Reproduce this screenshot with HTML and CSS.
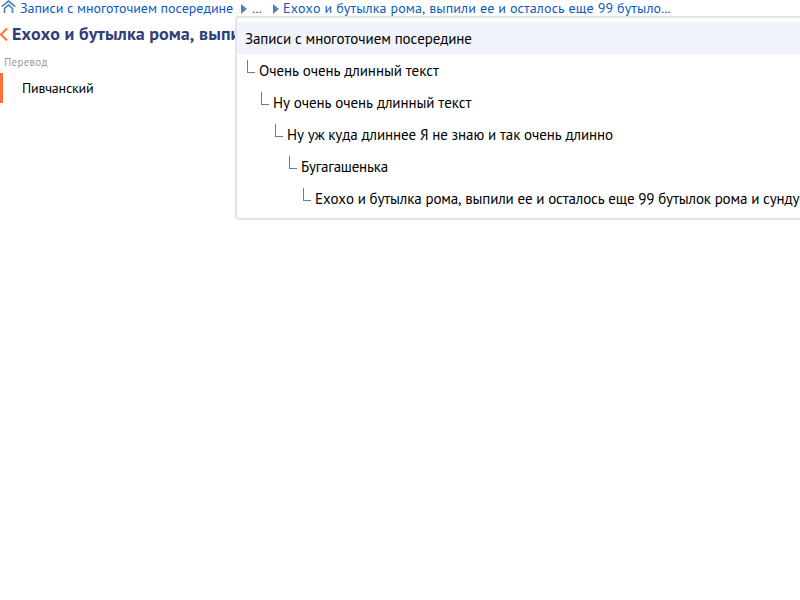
FILE: index.html
```
<!DOCTYPE html>
<html lang="ru">
<head>
<meta charset="utf-8">
<title>Перевод</title>
<link rel="stylesheet" href="styles.css">
</head>
<body>
<nav class="crumbs">
  <svg class="home" width="15" height="14" viewBox="0 0 15 14"><path d="M.700 6.700 7.500 1l6.800 5.700M3.500 13V8.500l4-3.700 4 3.700V13"/></svg>
  <a class="crumb first">Записи с многоточием посередине</a>
  <i class="arrow"></i>
  <a class="crumb dots">...</a>
  <i class="arrow"></i>
  <a class="crumb last">Ехохо и бутылка рома, выпили ее и осталось еще 99 бутыло...</a>
</nav>
<header class="heading">
  <svg class="back" width="8" height="14" viewBox="0 0 8 14"><path d="M7 1.500 1 7.500l6 6"/></svg>
  <h1 class="title">Ехохо и бутылка рома, выпи</h1>
</header>
<div class="label">Перевод</div>
<div class="value"><span>Пивчанский</span></div>
<ul class="menu">
  <li class="item active"><span>Записи с многоточием посередине</span></li>
  <li class="item l1"><i class="branch"></i><span>Очень очень длинный текст</span></li>
  <li class="item l2"><i class="branch"></i><span>Ну очень очень длинный текст</span></li>
  <li class="item l3"><i class="branch"></i><span>Ну уж куда длиннее Я не знаю и так очень длинно</span></li>
  <li class="item l4"><i class="branch"></i><span>Бугагашенька</span></li>
  <li class="item l5"><i class="branch"></i><span>Ехохо и бутылка рома, выпили ее и осталось еще 99 бутылок рома и сунду</span></li>
</ul>
</body>
</html>
```
FILE: styles.css
```
body {
  margin: 0;
  height: 600px;
  overflow: hidden;
  position: relative;
  background: #fff;
  color: #000;
  font: 15px/18px "PT Sans", "Noto Sans", sans-serif;
  font-kerning: none;
  white-space: nowrap;
}
.crumbs { display: flex; height: 18px; color: #0b5ac0; font-size: 14px; line-height: 17px; }
.home { flex: none; margin: 0 4px 0 1px; fill: none; stroke: #5580b8; stroke-width: 1.7; }
.crumb { flex: none; }
.first { width: 213px; letter-spacing: -0.05px; }
.dots { width: 13px; letter-spacing: 0.4px; }
.last { letter-spacing: 0.135px; }
.arrow { flex: none; margin: 4px 5px 0 8px; width: 0; height: 0; border: solid transparent; border-width: 5px 0 5px 6px; border-left-color: #5580b8; }
.arrow + .last { margin-left: -1px; }
.heading { display: flex; height: 34px; }
.back { flex: none; margin: 9px 4px 0 0; fill: none; stroke: #ff7033; stroke-width: 2; }
.title { margin: 0; width: 224px; font-size: 18px; line-height: 32px; letter-spacing: 0.05px; color: #313e78; }
.label { height: 21px; padding-left: 4px; font-size: 11px; line-height: 20px; letter-spacing: 0.3px; color: #999; }
.value { height: 30px; padding-left: 19px; border-left: 3px solid #ff7033; font-size: 14px; line-height: 31px; letter-spacing: -0.22px; }
.menu { position: absolute; left: 235px; right: 0; top: 16px; height: 192px; margin: 0; padding: 4px 0; border: 2px solid #e3e3e3; border-right: 0; border-radius: 4px 0 0 4px; background: #fff; list-style: none; overflow: hidden; }
.item { display: flex; height: 32px; padding-left: 8px; line-height: 34px; letter-spacing: -0.1px; }
.active { background: #eff3fb; }
.branch { flex: none; margin: 6px 4px 0 2px; width: 7px; height: 12px; border: solid #557db8; border-width: 0 0 1px 1px; }
.l1 { letter-spacing: -0.09px; }
.l2 { padding-left: 22px; letter-spacing: -0.09px; }
.l3 { padding-left: 36px; letter-spacing: -0.11px; }
.l4 { padding-left: 50px; letter-spacing: -0.22px; }
.l5 { padding-left: 64px; letter-spacing: -0.15px; }
```
